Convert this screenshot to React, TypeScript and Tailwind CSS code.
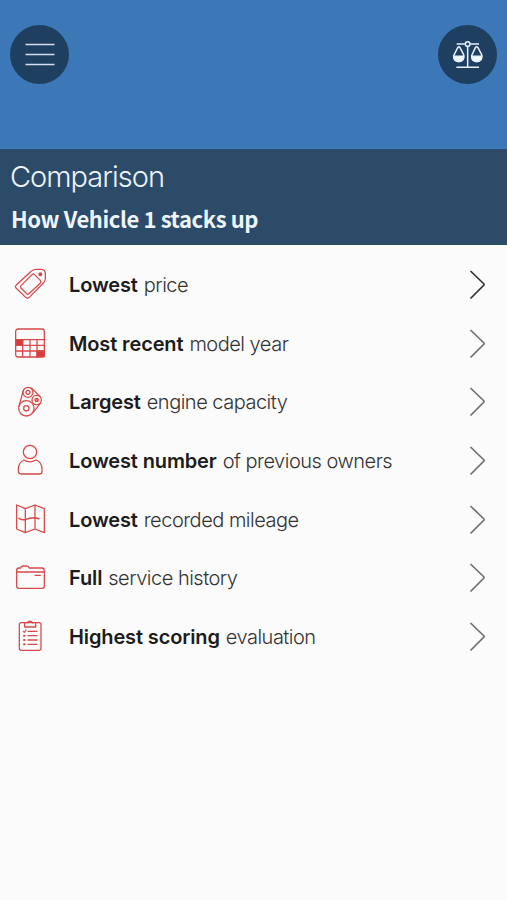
import React from "react";

const icons: Record<string, React.ReactNode> = {
  tag: (
    <>
      <path d="M33 76 L77 35 Q84 28 92 28 H109 Q121 29 121 40 V57 Q120 64 115 69 L73 112 Q68 117 62 112 L33 84 Q29 80 33 76 Z" />
      <path d="M48 77 L82 43 Q85 40 88 43 L106 61 Q109 65 106 69 L72 101 Q68 105 65 101 L48 84 Q45 80 48 77 Z" />
      <circle cx="106" cy="43" r="4" fill="#d63a3a" />
    </>
  ),
  calendar: (
    <g transform="translate(0 4)">
      <rect x="32" y="26" width="86" height="84" rx="7" />
      <path d="M32 58 H118 M32 75 H118 M32 92 H118 M53 58 V110 M75 58 V110 M96 58 V110" />
      <path d="M33 58 H53 V75 H33 Z M96 92 H118 V109 H96 Z" fill="#d63a3a" />
    </g>
  ),
  engine: (
    <>
      <circle cx="69" cy="46" r="15" />
      <circle cx="69" cy="46" r="6" />
      <circle cx="95" cy="69" r="14" />
      <circle cx="95" cy="69" r="5" fill="#d63a3a" fillOpacity=".6" />
      <circle cx="64" cy="94" r="23" />
      <circle cx="64" cy="94" r="8" />
      <path d="M54 43 L42 88 M79 33 L105 58 M106 79 L84 107" />
    </>
  ),
  person: (
    <>
      <circle cx="75" cy="48" r="20" />
      <path d="M57 72 Q75 83 93 72 Q111 79 111 99 V107 Q111 114 103 114 H49 Q40 114 40 106 V99 Q41 78 57 72 Z" />
    </>
  ),
  map: (
    <>
      <path d="M35 30 L61 41 L90 30 L118 41 V113 L90 102 L61 113 L35 102 Z M61 41 V113 M90 30 V102" />
      <path d="M42 70 Q51 76 60 74 Q73 68 90 68 L102 71" strokeWidth="4.5" />
    </>
  ),
  folder: (
    <>
      <path d="M35 57 V52 Q35 45 42 45 H47 Q49 39 54 39 H66 Q70 39 73 45 H111 Q118 46 118 53 V100 Q118 106 111 106 H42 Q35 106 35 100 V57 H118" />
      <path d="M90 67 H106" />
    </>
  ),
  checklist: (
    <>
      <rect x="43" y="32" width="65" height="83" rx="6" />
      <path d="M59 33 V45 H92 V33 M66 33 Q75 22 84 33" />
      <path d="M69 58 H96 M69 71 H96 M69 84 H96 M69 97 H96 M55 58 L58 61 L63 54" />
      <path d="M57 71 H59 M57 84 H59 M57 97 H59" strokeWidth="6" />
    </>
  ),
};

const rows = [
  { icon: "tag", bold: "Lowest", rest: "price", dark: true },
  { icon: "calendar", bold: "Most recent", rest: "model year" },
  { icon: "engine", bold: "Largest", rest: "engine capacity" },
  { icon: "person", bold: "Lowest number", rest: "of previous owners" },
  { icon: "map", bold: "Lowest", rest: "recorded mileage" },
  { icon: "folder", bold: "Full", rest: "service history" },
  { icon: "checklist", bold: "Highest scoring", rest: "evaluation" },
];

export default function App() {
  return (
    <div className="flex h-[900px] w-[507px] flex-col overflow-hidden bg-[#fbfbfb] font-['Inter','Liberation_Sans',sans-serif]">
      <nav className="flex h-[149px] shrink-0 items-start justify-between bg-[#3c78b8] px-[10px] pt-[25px]">
        <button className="flex size-[59px] items-center justify-center rounded-full bg-[#1f3f60]" aria-label="Menu">
          <svg width="59" height="59" fill="none" stroke="#d3dff0" strokeWidth="1.7">
            <path d="M15.5 19.5 H44.5 M15.5 29.5 H44.5 M15.5 39.5 H44.5" />
          </svg>
        </button>
        <button className="flex size-[59px] items-center justify-center rounded-full bg-[#1f3f60]" aria-label="Compare">
          <svg width="59" height="59" viewBox="24 30 177 177" fill="none" stroke="#e8f1fa" strokeWidth="4.5">
            <path d="M80 87 H105 M121 87 H147 M113 95 V157 M79 157 H147" />
            <circle cx="113" cy="87" r="7" />
            <path d="M83 98 Q87 93 90 98 L101 119 Q104 139 86 140 Q69 139 71 122 Z M136 98 Q140 93 144 98 L155 119 Q158 139 140 140 Q123 139 125 122 Z" />
            <path d="M72 124 H101 Q101 139 86 139 Q72 138 72 124 Z M126 124 H155 Q155 139 140 139 Q126 138 126 124 Z" fill="#f5faff" />
          </svg>
        </button>
      </nav>
      <header className="h-24 shrink-0 bg-[#2c4b69] px-[10px] pt-[9px] text-[#edf4fb]">
        <h1 className="h-[38px] text-[29px] leading-[38px] font-light tracking-[-1px] whitespace-nowrap">Comparison</h1>
        <h2 className="pl-px font-['Noto_Sans_CJK_SC',sans-serif] text-[22px] leading-[44px] font-bold tracking-[-0.4px] whitespace-nowrap">How Vehicle 1 stacks up</h2>
      </header>
      <ul className="pt-[11px]">
        {rows.map((r) => (
          <li key={r.icon} className="flex h-[58.6px] items-center pr-[20px] pl-[5px]">
            <svg className="size-[50px] shrink-0" viewBox="0 0 150 150" fill="none" stroke="#d84848" strokeWidth="3.8" strokeLinejoin="round" strokeLinecap="round">
              {icons[r.icon]}
            </svg>
            <p className="ml-[14px] flex-1 text-[20px] leading-[30px] whitespace-nowrap">
              <strong className="font-semibold tracking-[-0.13px] text-[#1c1c1c]">{r.bold}</strong>
              <span className="ml-[6px] font-light tracking-[-0.5px] text-[#333333]">{r.rest}</span>
            </p>
            <svg width="18" height="32" fill="none" stroke={r.dark ? "#333333" : "#707070"} strokeWidth="1.7" strokeLinejoin="round">
              <path d="M1.5 2 L15 15 V16 L1.5 29.5" />
            </svg>
          </li>
        ))}
      </ul>
    </div>
  );
}
